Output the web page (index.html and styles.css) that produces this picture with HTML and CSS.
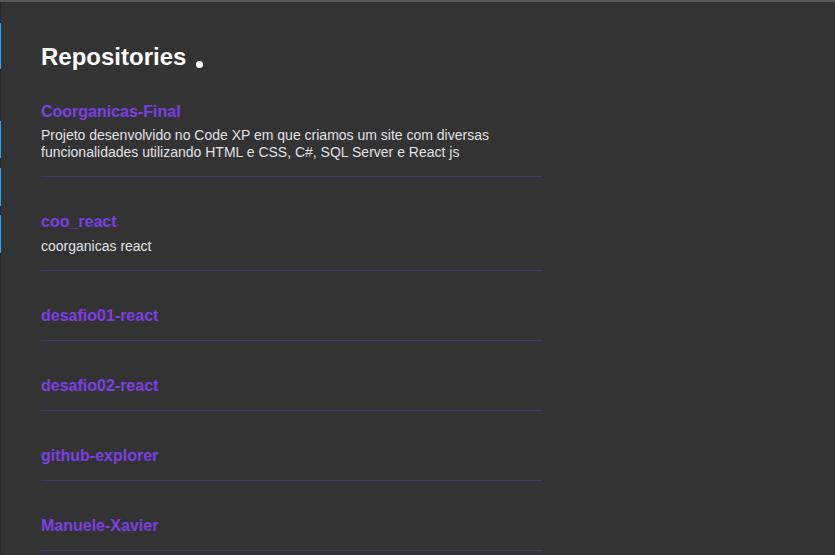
FILE: index.html
```html
<!DOCTYPE html>
<html lang="pt-BR">
<head>
<meta charset="utf-8">
<link rel="stylesheet" href="styles.css">
<title>Repositories</title>
</head>
<body>
<div class="frame">
  <div class="rail">
    <span class="mark m1"></span>
    <span class="mark m2"></span>
    <span class="mark m3"></span>
    <span class="mark m4"></span>
  </div>
  <main class="content">
    <h1 class="title">Repositories<span class="dot"></span></h1>
    <ul class="repos">
      <li class="repo">
        <strong class="name">Coorganicas-Final</strong>
        <p class="desc">Projeto desenvolvido no Code XP em que criamos um site com diversas funcionalidades utilizando HTML e CSS, C#, SQL Server e React js</p>
      </li>
      <li class="repo">
        <strong class="name">coo_react</strong>
        <p class="desc">coorganicas react</p>
      </li>
      <li class="repo"><strong class="name">desafio01-react</strong></li>
      <li class="repo"><strong class="name">desafio02-react</strong></li>
      <li class="repo"><strong class="name">github-explorer</strong></li>
      <li class="repo"><strong class="name">Manuele-Xavier</strong></li>
    </ul>
  </main>
</div>
</body>
</html>
```
FILE: styles.css
```css
* { box-sizing: border-box; }
html, body { margin: 0; padding: 0; height: 100%; }
body {
  background: #333333;
  font-family: "Liberation Sans", Arial, sans-serif;
  overflow: hidden;
}
.frame {
  display: flex;
  min-height: 100%;
  border-top: 2px solid #58585c;
}
.rail {
  width: 1px;
  flex: 0 0 1px;
  background: #2a2725;
  display: flex;
  flex-direction: column;
}
.mark { display: block; background: #3ea0e8; width: 1px; }
.m1 { margin-top: 21px; height: 46px; }
.m2 { margin-top: 52px; height: 37px; }
.m3 { margin-top: 10px; height: 38px; }
.m4 { margin-top: 9px; height: 38px; }
.content {
  padding: 0 0 0 40px;
  width: 541px;
}
.title {
  margin: 40px 0 0;
  font-size: 24px;
  line-height: 30px;
  height: 30px;
  font-weight: 700;
  color: #ffffff;
  display: flex;
  align-items: center;
}
.dot {
  display: block;
  width: 7px;
  height: 7px;
  border-radius: 50%;
  background: #ffffff;
  margin: 14px 0 0 10px;
}
.repos {
  list-style: none;
  margin: 14px 0 0;
  padding: 0;
}
.repo {
  border-bottom: 1px solid #46356f;
  padding: 16px 0 15px;
}
.repo + .repo { padding-top: 35px; }
.name {
  display: block;
  font-size: 16px;
  line-height: 19px;
  height: 19px;
  color: #7c3fe4;
  font-weight: 700;
}
.desc {
  margin: 7px 0 0;
  font-size: 14px;
  line-height: 17px;
  color: #e1e1e6;
}
.repo:first-child .desc { margin-top: 6px; }
```
